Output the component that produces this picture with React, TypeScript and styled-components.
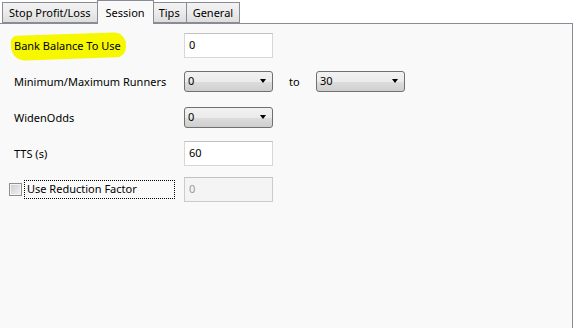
import React from "react";
import styled, { createGlobalStyle } from "styled-components";

const GlobalStyle = createGlobalStyle`
  body {
    margin: 0;
    background: #ffffff;
    font-family: "Noto Sans", "Open Sans", sans-serif;
    font-size: 11px;
    color: #000000;
  }
`;

const tabs = ["Stop Profit/Loss", "Session", "Tips", "General"];

export default function App(): React.ReactElement {
  return (
    <>
      <GlobalStyle />
      <Page>
        <TabStrip>
          {tabs.map((t) => (
            <Tab key={t} $active={t === "Session"}>
              {t}
            </Tab>
          ))}
        </TabStrip>
        <Panel>
          <Row>
            <Label>
              <Highlight>Bank Balance To Use</Highlight>
            </Label>
            <TextBox>0</TextBox>
          </Row>
          <Row>
            <Label>Minimum/Maximum Runners</Label>
            <Combo>
              <span>0</span>
              <Arrow />
            </Combo>
            <To>to</To>
            <Combo>
              <span>30</span>
              <Arrow />
            </Combo>
          </Row>
          <Row>
            <Label>WidenOdds</Label>
            <Combo>
              <span>0</span>
              <Arrow />
            </Combo>
          </Row>
          <Row>
            <Label>TTS (s)</Label>
            <TextBox>60</TextBox>
          </Row>
          <Row>
            <CheckLabel>
              <CheckBox />
              <Focus>Use Reduction Factor</Focus>
            </CheckLabel>
            <TextBox $disabled>0</TextBox>
          </Row>
        </Panel>
      </Page>
    </>
  );
}

const Page = styled.div`
  width: 576px;
  height: 328px;
  display: flex;
  flex-direction: column;
  overflow: hidden;
`;

const TabStrip = styled.div`
  display: flex;
  align-items: flex-end;
  height: 24px;
  padding-left: 2px;
  margin-bottom: -1px;
  position: relative;
  z-index: 1;
`;

const Tab = styled.div<{ $active?: boolean }>`
  height: ${(p) => (p.$active ? "24px" : "21px")};
  box-sizing: border-box;
  display: flex;
  align-items: center;
  flex-shrink: 0;
  padding: ${(p) => (p.$active ? "0 8px 1px" : "0 6px")};
  margin: ${(p) => (p.$active ? "0 -1px" : "0 0 1px")};
  border: 1px solid #898c95;
  border-bottom: ${(p) => (p.$active ? "none" : "1px solid #898c95")};
  border-left-width: ${(p) => (p.$active ? "1px" : "0")};
  background: ${(p) =>
    p.$active ? "#f9f9f9" : "linear-gradient(#f3f3f3, #ebebeb 50%, #dddddd)"};
  position: relative;
  z-index: ${(p) => (p.$active ? 2 : 1)};
  &:first-child {
    border-left-width: 1px;
  }
`;

const Panel = styled.div`
  flex: 1;
  background: #f9f9f9;
  border-top: 1px solid #898c95;
  border-right: 1px solid #898c95;
  margin-right: 3px;
  padding-top: 3px;
  display: flex;
  flex-direction: column;
`;

const Row = styled.div`
  height: 36px;
  display: flex;
  align-items: center;
`;

const Label = styled.div`
  width: 184px;
  flex-shrink: 0;
  box-sizing: border-box;
  padding-left: 14px;
  white-space: nowrap;
`;

const Highlight = styled.span`
  position: relative;
  z-index: 0;
  &::before {
    content: "";
    position: absolute;
    left: -3px;
    right: -5px;
    top: -4px;
    bottom: -6px;
    background: #f7f700;
    border-radius: 6px 12px 10px 14px;
    transform: rotate(-2deg);
    z-index: -1;
  }
`;

const TextBox = styled.div<{ $disabled?: boolean }>`
  width: 89px;
  height: 25px;
  flex-shrink: 0;
  box-sizing: border-box;
  border: 1px solid ${(p) => (p.$disabled ? "#c9cbce" : "#d5d7da")};
  border-top-color: ${(p) => (p.$disabled ? "#c0c2c5" : "#bfc1c4")};
  background: ${(p) => (p.$disabled ? "#f4f4f4" : "#ffffff")};
  color: ${(p) => (p.$disabled ? "#9a9a9a" : "#000000")};
  display: flex;
  align-items: center;
  padding: 0 0 2px 4px;
`;

const Combo = styled.div`
  width: 89px;
  height: 21px;
  flex-shrink: 0;
  box-sizing: border-box;
  border: 1px solid #707070;
  border-radius: 3px;
  background: linear-gradient(#f2f2f2, #ebebeb 50%, #dddddd 50%, #cfcfcf);
  display: flex;
  align-items: center;
  justify-content: space-between;
  padding: 0 6px 1px 3px;
`;

const Arrow = styled.i`
  width: 0;
  height: 0;
  border-left: 3.5px solid transparent;
  border-right: 3.5px solid transparent;
  border-top: 4px solid #000000;
  margin-top: 1px;
`;

const To = styled.div`
  width: 43px;
  flex-shrink: 0;
  box-sizing: border-box;
  padding-left: 16px;
`;

const CheckLabel = styled.div`
  width: 184px;
  flex-shrink: 0;
  box-sizing: border-box;
  padding-left: 9px;
  display: flex;
  align-items: center;
  gap: 2px;
`;

const CheckBox = styled.div`
  width: 13px;
  height: 13px;
  flex-shrink: 0;
  box-sizing: border-box;
  border: 1px solid #8e8f8f;
  background: linear-gradient(135deg, #cbcbcb, #f4f4f4);
  box-shadow: inset 0 0 0 1px #f4f4f4;
`;

const Focus = styled.div`
  width: 151px;
  height: 19px;
  box-sizing: border-box;
  border: 1px dotted #000000;
  padding: 0 0 1px 2px;
  display: flex;
  align-items: center;
  white-space: nowrap;
`;
